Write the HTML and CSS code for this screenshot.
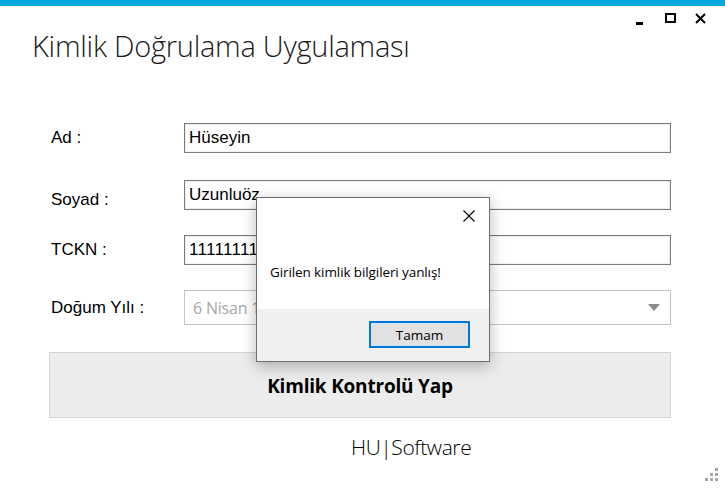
FILE: index.html
```html
<!DOCTYPE html>
<html lang="tr">
<head>
<meta charset="utf-8">
<title>Kimlik Doğrulama Uygulaması</title>
<link rel="stylesheet" href="styles.css">
</head>
<body>
<div class="window">
  <div class="accent"></div>
  <header class="titlebar">
    <h1 class="title">Kimlik Doğrulama Uygulaması</h1>
    <div class="controls">
      <span class="ctl ctl-min"></span>
      <span class="ctl ctl-max"></span>
      <svg class="ctl ctl-close" width="11" height="11" viewBox="0 0 11 11"><path d="M1 1 L10 10 M10 1 L1 10" stroke="#000" stroke-width="2"/></svg>
    </div>
  </header>

  <div class="form">
    <div class="row row-ad">
      <label class="label">Ad :</label>
      <div class="field">Hüseyin</div>
    </div>
    <div class="row row-soyad">
      <label class="label label-low">Soyad :</label>
      <div class="field">Uzunluöz</div>
    </div>
    <div class="row row-tckn">
      <label class="label">TCKN :</label>
      <div class="field field-num">11111111111</div>
    </div>
    <div class="row row-dogum">
      <label class="label">Doğum Yılı :</label>
      <div class="select">
        <span class="select-text">6 Nisan 1990 Cuma</span>
        <svg class="select-arrow" width="12" height="7" viewBox="0 0 12 7"><path d="M0 0 H12 L6 7 Z" fill="#8c8c8c"/></svg>
      </div>
    </div>
  </div>

  <div class="check">Kimlik Kontrolü Yap</div>

  <div class="brand">HU|Software</div>

  <svg class="grip" width="14" height="14" viewBox="0 0 14 14">
    <rect x="10" y="0" width="3" height="3" fill="#a6a6a6"/>
    <rect x="5" y="5" width="3" height="3" fill="#a6a6a6"/>
    <rect x="10" y="5" width="3" height="3" fill="#a6a6a6"/>
    <rect x="0" y="10" width="3" height="3" fill="#a6a6a6"/>
    <rect x="5" y="10" width="3" height="3" fill="#a6a6a6"/>
    <rect x="10" y="10" width="3" height="3" fill="#a6a6a6"/>
  </svg>

  <div class="dialog">
    <div class="dialog-body">
      <svg class="dialog-close" width="12" height="12" viewBox="0 0 12 12"><path d="M0.5 0.5 L11.5 11.5 M11.5 0.5 L0.5 11.5" stroke="#000" stroke-width="1.1"/></svg>
      <p class="dialog-msg">Girilen kimlik bilgileri yanlış!</p>
    </div>
    <div class="dialog-foot">
      <div class="ok">Tamam</div>
    </div>
  </div>
</div>
</body>
</html>
```

FILE: styles.css
```css
* { box-sizing: border-box; }
html, body { margin: 0; padding: 0; background: #fff; }
body { width: 725px; height: 488px; overflow: hidden; }

.window {
  position: relative;
  width: 725px;
  height: 488px;
  background: #fff;
  font-family: "Liberation Sans", Arial, sans-serif;
  color: #000;
}

.accent { height: 6px; background: #00a9db; }

.titlebar {
  display: flex;
  justify-content: space-between;
  align-items: flex-start;
  height: 117px;
}
.title {
  margin: 20px 0 0 32px;
  font-family: "Open Sans", sans-serif;
  font-weight: 300;
  font-size: 29px;
  line-height: 40px;
  color: #1a1a1a;
  letter-spacing: -0.25px;
}
.controls {
  display: flex;
  align-items: flex-start;
  margin: 7px 19px 0 0;
}
.ctl { display: block; }
.ctl-min { width: 7px; height: 3px; background: #000; margin: 9px 22px 0 0; }
.ctl-max { width: 11px; height: 10px; border: 2px solid #000; margin: 0 19px 0 0; }

.form { display: flex; flex-direction: column; }
.row {
  display: grid;
  grid-template-columns: 133px 487px;
  align-items: center;
  margin-left: 51px;
}
.row-soyad { margin-top: 27px; }
.row-tckn { margin-top: 25px; }
.row-dogum { margin-top: 25px; }

.label { font-size: 17px; line-height: 20px; }
.label-low { padding-top: 10px; }

.field {
  height: 30px;
  border: 1px solid #7a7a7a;
  box-shadow: inset 0 0 0 1px #f0f0f0;
  padding: 0 4px;
  font-size: 17px;
  line-height: 28px;
  background: #fff;
  white-space: nowrap;
  overflow: hidden;
}
.field-num { letter-spacing: 0.3px; }

.select {
  height: 35px;
  border: 1px solid #c4c4c4;
  display: flex;
  align-items: center;
  justify-content: space-between;
  padding: 0 10px 0 8px;
  background: #fff;
}
.select-text {
  font-family: "Open Sans", sans-serif;
  font-size: 16px;
  color: #a6a6a6;
  letter-spacing: -0.2px;
}
.select-arrow { display: block; }

.check {
  margin: 27px 0 0 49px;
  width: 622px;
  height: 66px;
  padding-top: 2px;
  background: #ececec;
  border: 1px solid #d4d4d4;
  display: flex;
  align-items: center;
  justify-content: center;
  font-family: "Open Sans", sans-serif;
  font-weight: 700;
  font-size: 19px;
  letter-spacing: -0.2px;
  color: #000;
}

.brand {
  margin: 15px 0 0 351px;
  font-family: "Open Sans", sans-serif;
  font-weight: 300;
  font-size: 21px;
  line-height: 28px;
  color: #000;
  letter-spacing: -0.4px;
}

.grip { position: absolute; right: 6px; bottom: 6px; }

.dialog {
  position: absolute;
  left: 256px;
  top: 197px;
  width: 234px;
  height: 165px;
  border: 1px solid #6e6e6e;
  background: #fff;
  box-shadow: 0 4px 14px rgba(0,0,0,0.28);
  display: flex;
  flex-direction: column;
}
.dialog-body {
  flex: 1;
  position: relative;
  padding: 0 0 0 13px;
}
.dialog-close { position: absolute; right: 14px; top: 12px; }
.dialog-msg {
  margin: 65px 0 0 0;
  font-family: "Open Sans", sans-serif;
  font-size: 13.5px;
  line-height: 18px;
  letter-spacing: -0.1px;
  color: #000;
}
.dialog-foot {
  height: 52px;
  background: #f0f0f0;
  display: flex;
  justify-content: flex-end;
  padding: 12px 19px 0 0;
}
.ok {
  width: 101px;
  height: 27px;
  border: 2px solid #0078d7;
  background: #e1e1e1;
  box-shadow: inset 0 0 0 1px #cfe6fa;
  display: flex;
  align-items: center;
  justify-content: center;
  font-family: "Open Sans", sans-serif;
  font-size: 13.5px;
  color: #000;
}
```
